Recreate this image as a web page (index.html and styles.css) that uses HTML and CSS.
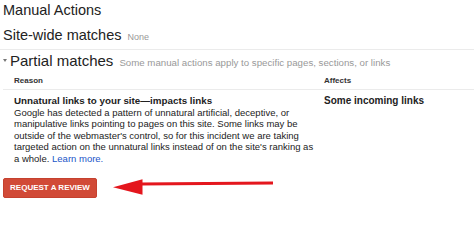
FILE: index.html
```html
<!DOCTYPE html>
<html>
<head>
<meta charset="utf-8">
<link rel="stylesheet" href="styles.css">
</head>
<body>
<div class="page">
  <h1 class="title">Manual Actions</h1>
  <div class="sitewide">Site-wide matches<span class="note note-small">None</span></div>
  <div class="partial"><span class="caret"></span>Partial matches<span class="note">Some manual actions apply to specific pages, sections, or links</span></div>
  <div class="table">
    <div class="row head">
      <div class="cell reason">Reason</div>
      <div class="cell affects">Affects</div>
    </div>
    <div class="row body">
      <div class="cell reason">
        <div class="issue">Unnatural links to your site—impacts links</div>
        <p class="desc">Google has detected a pattern of unnatural artificial, deceptive, or manipulative links pointing to pages on this site. Some links may be outside of the webmaster's control, so for this incident we are taking targeted action on the unnatural links instead of on the site's ranking as a whole. <a class="link" href="#">Learn more.</a></p>
      </div>
      <div class="cell affects"><div class="issue">Some incoming links</div></div>
    </div>
  </div>
  <div class="actions">
    <button class="btn">REQUEST A REVIEW</button>
    <svg class="arrow" width="162" height="16" viewBox="0 0 162 16" aria-hidden="true">
      <polygon points="0,8.3 29.5,0.3 29.5,15.8" fill="#e4161d"/>
      <polygon points="27,3.4 160,2.6 160,5.6 27,6.6" fill="#e4161d"/>
    </svg>
  </div>
</div>
</body>
</html>
```
FILE: styles.css
```css
html, body {
  margin: 0;
  padding: 0;
  background: #fff;
}
.page {
  font-family: "Liberation Sans", Arial, Helvetica, sans-serif;
  color: #222;
  width: 474px;
}
.title {
  margin: 0;
  padding-left: 3px;
  font-size: 14.5px;
  font-weight: normal;
  line-height: 20px;
}
.sitewide {
  margin-top: 5px;
  padding-left: 3px;
  padding-bottom: 4px;
  font-size: 14.5px;
  line-height: 20px;
  border-bottom: 1px solid #ebebeb;
}
.note {
  margin-left: 6px;
  font-size: 9.7px;
  line-height: 1;
  color: #999;
}
.note-small {
  font-size: 9px;
}
.partial {
  padding-left: 3px;
  font-size: 15px;
  line-height: 22px;
  height: 22px;
}
.caret {
  display: inline-block;
  width: 0;
  height: 0;
  border-left: 2.5px solid transparent;
  border-right: 2.5px solid transparent;
  border-top: 3px solid #777;
  margin-right: 3px;
  vertical-align: 4px;
}
.table {
  margin-left: 3px;
}
.row {
  display: grid;
  grid-template-columns: 321px 1fr;
}
.head {
  border-bottom: 1px solid #ebebeb;
}
.cell {
  padding-left: 11px;
}
.affects {
  padding-left: 0;
}
.head .cell {
  font-size: 8px;
  font-weight: bold;
  line-height: 17px;
  height: 17px;
  color: #333;
}
.body {
  padding-top: 5px;
}
.body .reason {
  padding-right: 10px;
}
.issue {
  font-size: 9.8px;
  font-weight: bold;
  line-height: 11.5px;
}
.affects .issue {
  font-size: 10px;
}
.desc {
  margin: 0;
  font-size: 9.5px;
  line-height: 11.5px;
}
.link {
  color: #1a55c8;
  text-decoration: none;
}
.actions {
  display: flex;
  align-items: flex-start;
  margin-top: 14px;
  padding-left: 3px;
}
.btn {
  width: 94px;
  height: 20px;
  padding: 0;
  border: 1px solid #c5412f;
  border-radius: 2px;
  background: #d14a37;
  color: #fff;
  font-family: "Liberation Sans", Arial, Helvetica, sans-serif;
  font-size: 8px;
  font-weight: bold;
  line-height: 18px;
  text-align: center;
}
.arrow {
  display: block;
  margin-left: 16px;
  margin-top: 1px;
}
```
